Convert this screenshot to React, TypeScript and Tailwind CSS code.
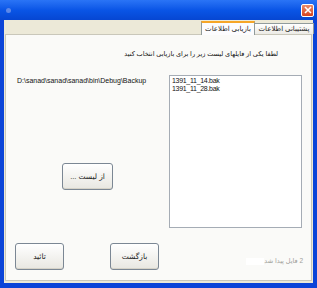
import React from 'react'

const font = { fontFamily: '"Liberation Sans", "DejaVu Sans", sans-serif' }

function XpButton({ label, className = '' }: { label: string; className?: string }) {
  return (
    <button
      dir="rtl"
      className={`flex items-center justify-center whitespace-nowrap rounded-[3px] border border-[#7b8794] bg-gradient-to-b from-white to-[#e8e7e1] text-[7.5px] text-[#222] shadow-[inset_0_-1px_0_#d6d3c8] ${className}`}
    >
      {label}
    </button>
  )
}

export default function App() {
  return (
    <div className="w-[317px] h-[288px] bg-[#0b44d8] flex flex-col overflow-hidden" style={font}>
      {/* title bar */}
      <div className="h-[20px] flex items-center justify-between px-[6px] bg-gradient-to-b from-[#2a74f6] via-[#0a55e6] to-[#0646d2]">
        <div className="w-[5px] h-[5px] rounded-full bg-[#5d88e8]" />
        <div className="w-[13px] h-[13px] -mr-[3px] rounded-[2px] border border-white bg-gradient-to-b from-[#e88a6a] to-[#d5401c] flex items-center justify-center">
          <svg width="8" height="8" viewBox="0 0 8 8">
            <path d="M1 1 L7 7 M7 1 L1 7" stroke="white" strokeWidth="1.6" />
          </svg>
        </div>
      </div>

      {/* window body */}
      <div className="flex-1 ml-[4px] mr-[4px] mb-[5px] bg-[#ece9d8] flex flex-col">
        {/* tab strip */}
        <div className="h-[14px] flex justify-end items-end -mr-[1px] relative z-10">
          <div dir="rtl" className="h-[14px] w-[54px] -mb-[1px] bg-[#fcfcfe] border border-b-0 border-[#919b9c] border-t-[2px] border-t-[#f6a627] flex items-center justify-center whitespace-nowrap text-[7px] leading-[8px] text-[#222]">
            بازیابی اطلاعات
          </div>
          <div dir="rtl" className="h-[11px] w-[59px] bg-gradient-to-b from-white to-[#ecebe6] border border-l-0 border-b-0 border-[#919b9c] flex items-center justify-center whitespace-nowrap text-[7px] leading-[8px] text-[#222]">
            پشتیبانی اطلاعات
          </div>
        </div>

        {/* tab page */}
        <div className="flex-1 ml-[1px] mr-[1px] mb-[2px] border border-[#c9c7ba] bg-[#fafaf8] flex flex-col">
          <div className="mt-[14px] pr-[33px] text-right text-[6.5px] leading-[10px] text-[#111] whitespace-nowrap" dir="rtl">
            لطفا یکی از فایلهای لیست زیر را برای بازیابی انتخاب کنید
          </div>

          <div className="mt-[16px] flex">
            <div className="w-[163px] pl-[11px] flex flex-col">
              <div className="mt-[1px] text-[7px] leading-[9px] text-[#111]">D:\sanad\sanad\sanad\bin\Debug\Backup</div>
              <XpButton label="از لیست ..." className="mt-[78px] ml-[45px] w-[51px] h-[27px]" />
            </div>
            <div className="w-[133px] h-[153px] border border-[#a5acb5] bg-white pl-[2px] pt-[1px]">
              <div className="text-[7px] leading-[8px] tracking-[-0.3px] text-[#111]">1391_11_14.bak</div>
              <div className="text-[7px] leading-[8px] tracking-[-0.3px] text-[#111]">1391_11_28.bak</div>
            </div>
          </div>

          <div className="mt-[15px] flex items-center">
            <XpButton label="تائید" className="ml-[9px] w-[49px] h-[27px]" />
            <XpButton label="بازگشت" className="ml-[46px] w-[49px] h-[27px]" />
            <div className="ml-auto mr-[8px] mt-[9px] flex items-center">
              <div className="w-[18px] h-[7px] bg-white" />
              <div className="text-[6.5px] leading-[8px] text-[#a0a09a] whitespace-nowrap" dir="rtl">2 فایل پیدا شد</div>
            </div>
          </div>
        </div>
      </div>
    </div>
  )
}
